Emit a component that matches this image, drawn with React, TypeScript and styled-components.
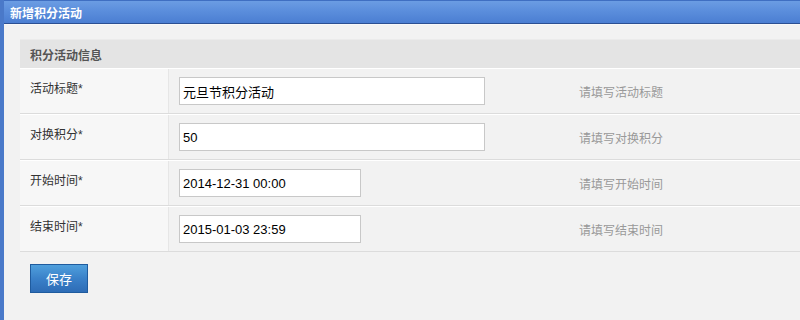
import styled, { createGlobalStyle } from 'styled-components'

const GlobalStyle = createGlobalStyle`
  html, body {
    margin: 0;
    padding: 0;
    background: #f2f2f2;
  }
  body {
    font-family: "Liberation Sans", Arial, "Noto Sans CJK SC", sans-serif;
    font-size: 12px;
    color: #333;
  }
`

const Window = styled.div`
  display: flex;
  flex-direction: column;
  width: 800px;
  height: 320px;
  box-sizing: border-box;
  border-left: 4px solid #4a79c9;
  background: #f2f2f2;
  overflow: hidden;
`

const TitleBar = styled.div`
  height: 22px;
  margin-left: -4px;
  padding-left: 10px;
  display: flex;
  align-items: center;
  border-top: 1px solid #3f6fc2;
  border-bottom: 1px solid #2b4f92;
  background: linear-gradient(to bottom, #6b9de3 0%, #5b8edc 45%, #4b7ed2 100%);
  color: #fff;
  font-weight: bold;
  font-size: 12px;
  flex-shrink: 0;
`

const Body = styled.div`
  padding: 14px 0 0 16px;
  border-top: 1px solid #f8f8f8;
`

const Section = styled.div`
  display: flex;
  flex-direction: column;
`

const SectionHeader = styled.div`
  height: 28px;
  display: flex;
  align-items: center;
  padding-left: 10px;
  background: #e4e4e4;
  border-top: 1px solid #ebebeb;
  color: #555;
  font-weight: bold;
  font-size: 12px;
`

const Row = styled.div`
  display: grid;
  grid-template-columns: 149px 1fr;
  height: 44px;
  border-top: 1px solid #fff;
  border-bottom: 1px solid #dcdcdc;
  box-sizing: content-box;
`

const Label = styled.div`
  padding: 10px 0 0 10px;
  background: #f7f7f7;
  border-right: 1px solid #e6e6e6;
  color: #333;
  font-size: 12px;
`

const Field = styled.div`
  display: flex;
  align-items: center;
  padding-left: 10px;
`

const Input = styled.input<{ $wide?: boolean }>`
  width: ${(p) => (p.$wide ? '306px' : '182px')};
  height: 28px;
  box-sizing: border-box;
  border: 1px solid #c8c8c8;
  background: #fff;
  padding: 0 4px 0 3px;
  font-family: "Liberation Sans", Arial, "Noto Sans CJK SC", sans-serif;
  font-size: 13px;
  color: #000;
  outline: none;
`

const Hint = styled.span<{ $wide?: boolean }>`
  margin-left: ${(p) => (p.$wide ? '94px' : '218px')};
  color: #999;
  font-size: 12px;
`

const Actions = styled.div`
  padding: 12px 0 0 10px;
`

const SaveButton = styled.button`
  width: 58px;
  height: 29px;
  border: 1px solid #1f5b9e;
  background: linear-gradient(to bottom, #4f9fdc 0%, #3a81c9 50%, #2e6cb6 100%);
  color: #fff;
  font-family: "Liberation Sans", Arial, "Noto Sans CJK SC", sans-serif;
  font-size: 13px;
  cursor: pointer;
`

const rows = [
  { label: '活动标题*', value: '元旦节积分活动', hint: '请填写活动标题', wide: true },
  { label: '对换积分*', value: '50', hint: '请填写对换积分', wide: true },
  { label: '开始时间*', value: '2014-12-31 00:00', hint: '请填写开始时间', wide: false },
  { label: '结束时间*', value: '2015-01-03 23:59', hint: '请填写结束时间', wide: false },
]

export default function App() {
  return (
    <>
      <GlobalStyle />
      <Window>
        <TitleBar>新增积分活动</TitleBar>
        <Body>
          <Section>
            <SectionHeader>积分活动信息</SectionHeader>
            {rows.map((r) => (
              <Row key={r.label}>
                <Label>{r.label}</Label>
                <Field>
                  <Input $wide={r.wide} defaultValue={r.value} />
                  <Hint $wide={r.wide}>{r.hint}</Hint>
                </Field>
              </Row>
            ))}
          </Section>
          <Actions>
            <SaveButton>保存</SaveButton>
          </Actions>
        </Body>
      </Window>
    </>
  )
}
